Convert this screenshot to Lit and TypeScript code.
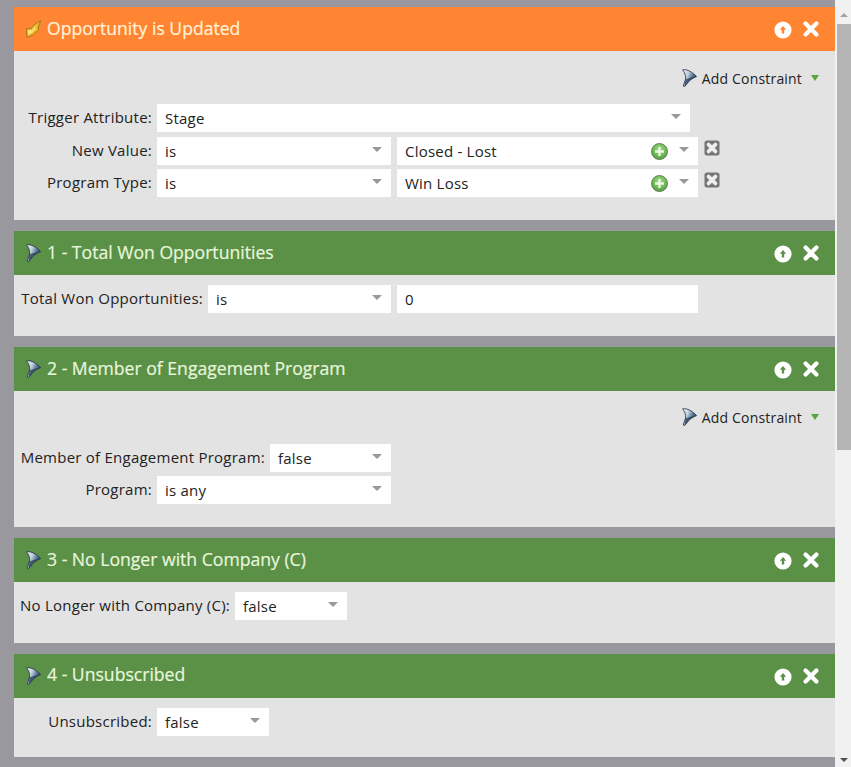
import { LitElement, html, css } from "lit";
import { customElement } from "lit/decorators.js";

const funnel = () => html`<svg class="funnel" width="15" height="18" viewBox="0 0 15 18">
  <defs><linearGradient id="fg" x1="0" y1="0" x2="1" y2="0.5"><stop offset="0" stop-color="#f6f8fb"/><stop offset="0.4" stop-color="#c4d1df"/><stop offset="0.7" stop-color="#5f7b9b"/><stop offset="1" stop-color="#1d3354"/></linearGradient></defs>
  <path d="M0.6 0.8 C5 0 10.5 3 14.6 7.6 C11 9 8.5 10.6 6.5 12.8 L2.6 17.6 L1.2 17 L3.6 10 C4 6.5 2.6 3.6 0.6 0.8 Z" fill="url(#fg)" stroke="#1f2f44" stroke-width="0.8"/>
  <path d="M3.4 10.5 C6 9.5 9 8.4 14.2 7.6 C11 9 8.5 10.6 6.5 12.8 L2.6 17.4 Z" fill="#1f3553" opacity="0.7"/>
</svg>`;

const wand = html`<svg class="funnel" width="15" height="18" viewBox="0 0 15 18">
  <path d="M1 17.4 L0.4 8.6 L5 8.6 L8 4.8 L14.6 0.6 L12.4 7 L12.4 10 L7 15 Z" fill="#eeb827" stroke="#9c7420" stroke-width="0.9"/>
  <path d="M2.2 15 L2 10.2 L6 10.2 L9.6 6 L9.4 9.6 L5.5 13 Z" fill="#ffe27a"/>
</svg>`;

const upIcon = html`<svg class="act up" width="18" height="18" viewBox="0 0 18 18">
  <path fill-rule="evenodd" fill="#fff" d="M9 0.4a8.6 8.6 0 1 1 0 17.2a8.6 8.6 0 1 1 0-17.2Z M9 5 L5.8 8.8 H7.8 V12.6 H10.2 V8.8 H12.2 Z"/>
</svg>`;

const xIcon = html`<svg class="act" width="16" height="16" viewBox="0 0 16 16">
  <path fill="none" stroke="#fff" stroke-width="4.2" stroke-linecap="round" d="M2.6 2.6 L13.4 13.4 M13.4 2.6 L2.6 13.4"/>
</svg>`;

const plus = html`<svg class="plus" width="17" height="17" viewBox="0 0 17 17">
  <defs><radialGradient id="pg" cx="0.5" cy="0.35" r="0.7"><stop offset="0" stop-color="#9bdc80"/><stop offset="1" stop-color="#4f9e3c"/></radialGradient></defs>
  <circle cx="8.5" cy="8.5" r="8" fill="url(#pg)" stroke="#4b6b44" stroke-width="0.8"/>
  <path d="M8.5 4 V13 M4 8.5 H13" stroke="#eaf8e2" stroke-width="2.4"/>
</svg>`;

const del = html`<svg class="del" width="16" height="16" viewBox="0 0 16 16">
  <rect x="0.5" y="0.5" width="15" height="15" rx="2.5" fill="#757575"/>
  <path d="M4.6 4.6 L11.4 11.4 M11.4 4.6 L4.6 11.4" stroke="#efefef" stroke-width="3.8" stroke-linecap="round"/>
</svg>`;

const select = (value: string, width: number) => html`<div class="box sel" style="width:${width}px"><span>${value}</span><i class="caret"></i></div>`;
const combo = (value: string) => html`<div class="box sel combo"><span>${value}</span>${plus}<i class="caret"></i></div>${del}`;
const label = (text: string, width: number) => html`<label style="width:${width}px">${text}:</label>`;

const addConstraint = html`<div class="add">${funnel()}<span>Add Constraint</span><svg class="tri" width="8" height="6" viewBox="0 0 8 6"><path d="M0 0 H8 L4 6 Z" fill="#55a63c"/></svg></div>`;

const card = (kind: string, title: string, cls: string, body: unknown) => html`
  <section class="card">
    <header class=${kind}>
      ${kind === "orange" ? wand : funnel()}
      <h2 class=${cls}>${title}</h2>
      ${upIcon}${xIcon}
    </header>
    <div class="body ${cls}">${body}</div>
  </section>`;

@customElement("app-root")
export class AppRoot extends LitElement {
  static styles = css`
    :host { display: flex; width: 851px; height: 767px; overflow: hidden; background: #98989e; font-family: "Open Sans", sans-serif; font-size: 15px; color: #222; }
    .main { width: 821px; margin-left: 14px; padding-top: 7px; display: flex; flex-direction: column; gap: 11px; }
    .card { display: block; }
    header { height: 44px; display: flex; align-items: center; padding-left: 12px; box-sizing: border-box; }
    header.orange { background: #ff8533; }
    header.green { background: #5a9147; }
    h2 { margin: 0 0 0 6px; flex: 1; font-size: 17.6px; font-weight: 400; line-height: 44px; position: relative; top: -1px; -webkit-text-stroke: 0.2px currentColor; }
    h2.b4 { top: -2px; }
    .orange h2 { color: #fff3d9; }
    .green h2 { color: #e9f6dd; }
    .act { flex: none; }
    .up { margin-right: 11px; position: relative; top: 1px; }
    header .act:last-child { margin-right: 16px; }
    .funnel { flex: none; }
    .body { background: #e3e3e3; display: flex; flex-direction: column; box-sizing: border-box; }
    .body.b0 { height: 169px; padding-top: 16px; }
    .body.b1 { height: 61px; padding-top: 10px; }
    .body.b2 { height: 136px; padding-top: 15px; }
    .body.b2 .add { margin-bottom: 16px; }
    .body.b3 { height: 61px; padding-top: 10px; }
    .body.b4 { height: 59px; padding-top: 10px; }
    .add { height: 22px; display: flex; align-items: center; justify-content: flex-end; margin-bottom: 15px; padding-right: 16px; font-size: 14px; letter-spacing: 0.18px; }
    .add span { margin: 0 9px 0 5px; }
    .add .tri { flex: none; }
    .row { display: flex; align-items: flex-start; height: 28px; }
    .gap5 { margin-top: 5px; }
    .gap4 { margin-top: 4px; }
    label { flex: none; box-sizing: border-box; text-align: right; line-height: 26px; padding-right: 5px; letter-spacing: 0.24px; white-space: nowrap; }
    .box { flex: none; box-sizing: border-box; height: 28px; background: #fff; display: flex; align-items: center; padding: 0 0 0 8px; letter-spacing: 0.22px; }
    .sel span { flex: 1; }
    .caret { flex: none; width: 0; height: 0; margin: -3px 9px 0 0; border-left: 5px solid transparent; border-right: 5px solid transparent; border-top: 5px solid #999; }
    .combo { width: 301px; margin-left: 6px; }
    .plus { flex: none; margin-right: 11px; }
    .del { flex: none; margin: 3px 0 0 6px; }
    .input { width: 301px; margin-left: 6px; }
    .scroll { width: 16px; flex: none; background: #f1f1f1; display: flex; flex-direction: column; align-items: flex-end; }
    .btn { width: 16px; height: 24px; display: flex; align-items: center; justify-content: center; padding-left: 2px; box-sizing: border-box; }
    .thumb { width: 14px; height: 426px; background: #b4b4b4; }
    .sp { flex: 1; }
    .btn.bot { height: 17px; }
    .a-up { width: 0; height: 0; border-left: 4px solid transparent; border-right: 4px solid transparent; border-bottom: 4px solid #a3a3a3; margin-top: 6px; }
    .a-dn { width: 0; height: 0; border-left: 4px solid transparent; border-right: 4px solid transparent; border-top: 4px solid #505050; margin-top: 3px; }
  `;

  render() {
    return html`
      <div class="main">
        ${card("orange", "Opportunity is Updated", "b0", html`
          ${addConstraint}
          <div class="row">${label("Trigger Attribute", 143)}${select("Stage", 533)}</div>
          <div class="row gap5">${label("New Value", 143)}${select("is", 234)}${combo("Closed - Lost")}</div>
          <div class="row gap4">${label("Program Type", 143)}${select("is", 234)}${combo("Win Loss")}</div>
        `)}
        ${card("green", "1 - Total Won Opportunities", "b1", html`
          <div class="row">${label("Total Won Opportunities", 194)}${select("is", 183)}<div class="box input">0</div></div>
        `)}
        ${card("green", "2 - Member of Engagement Program", "b2", html`
          ${addConstraint}
          <div class="row">${label("Member of Engagement Program", 256)}${select("false", 121)}</div>
          <div class="row gap4">${label("Program", 143)}${select("is any", 234)}</div>
        `)}
        ${card("green", "3 - No Longer with Company (C)", "b3", html`
          <div class="row">${label("No Longer with Company (C)", 221)}${select("false", 112)}</div>
        `)}
        ${card("green", "4 - Unsubscribed", "b4", html`
          <div class="row">${label("Unsubscribed", 143)}${select("false", 112)}</div>
        `)}
      </div>
      <div class="scroll">
        <div class="btn"><i class="a-up"></i></div>
        <div class="thumb"></div>
        <div class="sp"></div>
        <div class="btn bot"><i class="a-dn"></i></div>
      </div>
    `;
  }
}
